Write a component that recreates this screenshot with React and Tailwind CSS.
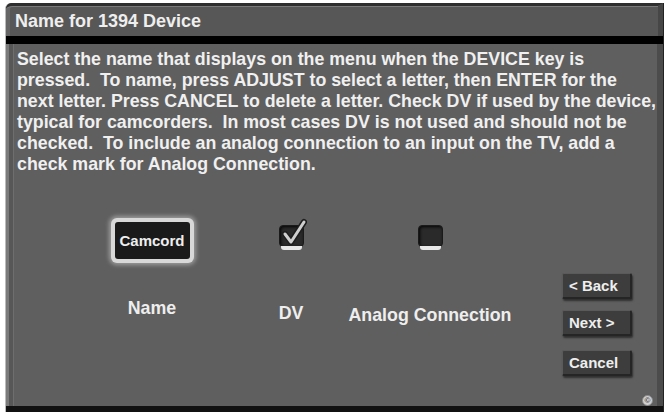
import React from 'react';

const lines = [
  'Select the name that displays on the menu when the DEVICE key is',
  'pressed.  To name, press ADJUST to select a letter, then ENTER for the',
  'next letter. Press CANCEL to delete a letter. Check DV if used by the device,',
  'typical for camcorders.  In most cases DV is not used and should not be',
  'checked.  To include an analog connection to an input on the TV, add a',
  'check mark for Analog Connection.',
];

const NavButton = ({ children }) => (
  <div className="h-[26px] w-[70px] flex items-center pl-[6px] bg-[#3d3d3d] border-t border-l border-[#5a5a5a] border-b-2 border-r-2 border-b-[#252525] border-r-[#252525] rounded-[2px] shadow-[1px_2px_2px_rgba(0,0,0,0.5)] text-[15px] font-bold text-[#eeeeee]">
    {children}
  </div>
);

const Checkbox = ({ checked }) => (
  <div className="relative w-[25px] h-[25px]">
    <div className="w-[25px] h-[22px] rounded-[4px] bg-[#2a2a2a] border border-[#1a1a1a] shadow-[inset_1px_1px_3px_rgba(0,0,0,0.9)]" />
    <div className="absolute left-[2px] right-[2px] bottom-0 h-[4px] rounded-b-[3px] bg-[#e8e8e8]" />
    {checked && (
      <svg className="absolute left-[2px] top-[-7px]" width="26" height="28" viewBox="0 0 26 28">
        <path d="M4 16 L10 24 L23 4" fill="none" stroke="#1e1e1e" strokeWidth="6" strokeLinecap="round" strokeLinejoin="round" />
        <path d="M4 16 L10 24 L23 4" fill="none" stroke="#cfcfcf" strokeWidth="3" strokeLinecap="round" strokeLinejoin="round" />
      </svg>
    )}
  </div>
);

export default function App() {
  return (
    <div className="w-[668px] h-[412px] bg-white pt-[3px] pl-[5px] pr-[4px] overflow-hidden font-[family-name:'Liberation_Sans',Arial,sans-serif]">
      <div className="h-[409px] flex flex-col bg-[#3a3a3a] rounded-tl-[6px] border-l border-[#bbb] border-r border-r-[#222]">
        {/* title bar */}
        <div className="h-[34px] flex items-center pl-[9px] bg-[#575757] border-t-[3px] border-[#2e2e2e] rounded-tl-[6px] shadow-[inset_0_1px_0_#7a7a7a,inset_4px_0_0_#666] border-r-[5px] border-r-[#464646]">
          <span className="text-[18px] font-bold text-[#eeeeee] mt-[1px]">Name for 1394 Device</span>
        </div>
        <div className="h-[9px] bg-black" />
        {/* content */}
        <div className="flex-1 flex bg-[#5f5f5f] border-l-[3px] border-[#7a7a7a] border-r-[6px] border-r-[#4c4c4c]">
          <div className="w-[5px] bg-[#575757] border-r border-[#6e6e6e]" />
          <div className="flex-1 flex flex-col pt-[5px] pl-[3px]">
            <div className="text-[17.8px] leading-[21px] font-bold text-[#f0f0f0] whitespace-pre">
              {lines.map((l) => (
                <div key={l}>{l}</div>
              ))}
            </div>
            <div className="flex items-start">
              <div className="ml-[73px] w-[124px] flex flex-col items-center pt-[43px]">
                <div className="w-[83px] h-[45px] rounded-[6px] bg-[#d8d8d8] p-[4px] shadow-[0_0_4px_2px_rgba(230,230,230,0.45)]">
                  <div className="w-full h-full rounded-[3px] bg-[#1a1a1a] flex items-center justify-center text-[15px] font-bold text-[#eeeeee]">
                    Camcord
                  </div>
                </div>
                <div className="mt-[32px] text-[17.8px] font-bold text-[#eeeeee]">Name</div>
              </div>
              <div className="ml-[37px] w-[80px] flex flex-col items-center pt-[50px]">
                <Checkbox checked />
                <div className="mt-[50px] text-[17.8px] font-bold text-[#eeeeee]">DV</div>
              </div>
              <div className="ml-[14px] w-[170px] flex flex-col items-center pt-[50px]">
                <Checkbox />
                <div className="mt-[52px] text-[17.8px] font-bold text-[#eeeeee]">Analog Connection</div>
              </div>
              <div className="ml-[47px] flex flex-col pt-[98px]">
                <NavButton>&lt; Back</NavButton>
                <div className="h-[11px]" />
                <NavButton>Next &gt;</NavButton>
                <div className="h-[14px]" />
                <NavButton>Cancel</NavButton>
              </div>
              <div className="ml-[10px] pt-[220px]">
                <div className="w-[11px] h-[11px] rounded-full bg-[#d0d0d0] border border-[#888] flex items-center justify-center text-[8px] leading-none font-bold text-[#444]">©</div>
              </div>
            </div>
          </div>
        </div>
        <div className="h-[6px] bg-[#111]" />
      </div>
    </div>
  );
}
